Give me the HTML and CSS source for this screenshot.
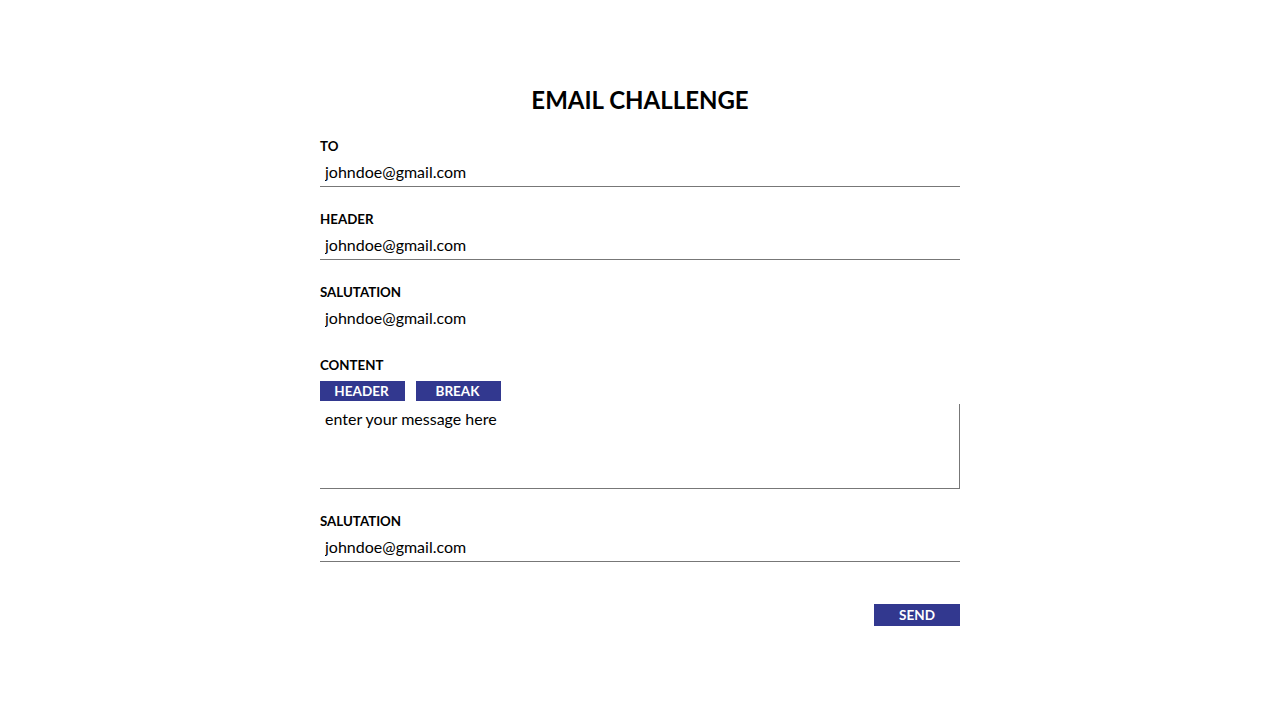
FILE: index.html
```html
<!DOCTYPE html>
<html lang="en">
<head>
<meta charset="utf-8">
<title>Email Challenge</title>
<link rel="stylesheet" href="styles.css">
</head>
<body>
<main class="page">
  <h1 class="title">EMAIL CHALLENGE</h1>
  <form class="form">
    <div class="field">
      <label class="label">TO</label>
      <input class="input" type="text" value="johndoe@gmail.com">
    </div>
    <div class="field">
      <label class="label">HEADER</label>
      <input class="input" type="text" value="johndoe@gmail.com">
    </div>
    <div class="field">
      <label class="label">SALUTATION</label>
      <input class="input input-plain" type="text" value="johndoe@gmail.com">
    </div>
    <div class="field">
      <label class="label">CONTENT</label>
      <div class="tools">
        <button type="button" class="btn">HEADER</button>
        <button type="button" class="btn">BREAK</button>
      </div>
      <textarea class="textarea" placeholder="enter your message here"></textarea>
    </div>
    <div class="field">
      <label class="label">SALUTATION</label>
      <input class="input" type="text" value="johndoe@gmail.com">
    </div>
    <div class="actions">
      <button type="button" class="btn btn-send">SEND</button>
    </div>
  </form>
</main>
</body>
</html>
```
FILE: styles.css
```css
* { box-sizing: border-box; }
html, body { margin: 0; padding: 0; background: #fff; }
body { font-family: Lato, "Open Sans", Arial, sans-serif; color: #000; }

.page {
  width: 640px;
  margin: 0 auto;
  padding-top: 86px;
}

.title {
  margin: 0 0 23px;
  font-size: 24px;
  line-height: 28px;
  font-weight: 700;
  text-align: center;
}

.form { display: flex; flex-direction: column; }

.field {
  display: flex;
  flex-direction: column;
  margin-bottom: 23px;
}

.label {
  font-size: 13.3px;
  line-height: 16px;
  font-weight: 700;
  padding-top: 1px;
  margin-bottom: 3px;
}

.input {
  height: 30px;
  padding: 0 5px;
  border: 0;
  border-bottom: 1px solid #777;
  font-family: inherit;
  font-size: 16px;
  color: #000;
  background: transparent;
  outline: none;
}
.input-plain { border-bottom-color: transparent; }

.tools {
  display: flex;
  gap: 11px;
  margin-top: 5px;
  margin-bottom: 3px;
}

.btn {
  width: 85px;
  height: 20px;
  padding: 0 2px 0 0;
  border: 0;
  background: #32388f;
  color: #fff;
  font-family: inherit;
  font-size: 13.5px;
  font-weight: 700;
  line-height: 20px;
  cursor: pointer;
}

.textarea {
  height: 85px;
  padding: 5px 5px;
  border: 0;
  border-right: 1px solid #777;
  border-bottom: 1px solid #777;
  font-family: inherit;
  font-size: 16px;
  line-height: 19px;
  resize: none;
  outline: none;
  color: #000;
}
.textarea::placeholder { color: #000; opacity: 1; }

.actions {
  display: flex;
  justify-content: flex-end;
  margin-top: 19px;
}
.btn-send { width: 86px; height: 22px; line-height: 22px; padding: 0; }
```
